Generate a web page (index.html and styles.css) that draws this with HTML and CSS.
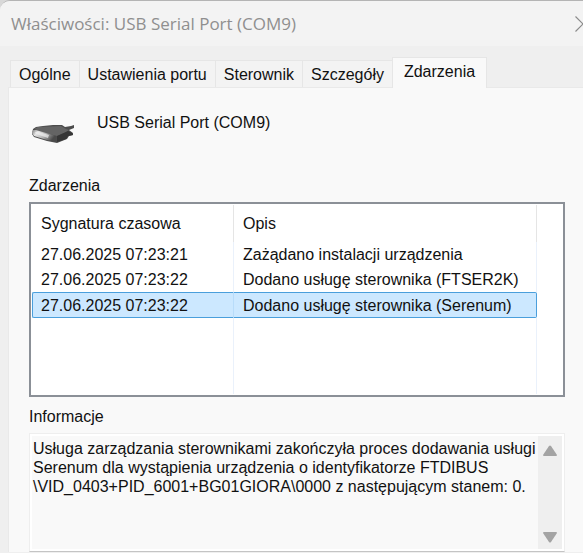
FILE: index.html
```
<!DOCTYPE html>
<html lang="pl">
<head>
  <meta charset="UTF-8" />
  <title>Właściwości: USB Serial Port (COM9)</title>
  <link rel="stylesheet" href="styles.css">
</head>
<body>

<div class="window">
  <header class="titlebar">
    <h1>Właściwości: USB Serial Port (COM9)</h1>
    <button type="button" class="close" aria-label="Zamknij">
      <svg width="16" height="16" viewBox="0 0 16 16" fill="none" stroke="#8c8c8c" stroke-width="1.2">
        <path d="M.5 .5L15.500 15.500M15.500 .5L.5 15.500" />
      </svg>
    </button>
  </header>

  <div class="tabs" role="tablist">
    <button type="button" class="tab" role="tab">Ogólne</button>
    <button type="button" class="tab" role="tab">Ustawienia portu</button>
    <button type="button" class="tab" role="tab">Sterownik</button>
    <button type="button" class="tab" role="tab">Szczegóły</button>
    <button type="button" class="tab active" role="tab" aria-selected="true">Zdarzenia</button>
  </div>

  <main class="panel">
    <div class="device">
      <svg class="device-icon" width="44" height="24" viewBox="0 0 44 24">
        <defs>
          <linearGradient id="front" x1="0" y1="0" x2="1" y2="0.400">
            <stop offset="0" stop-color="#777" />
            <stop offset="0.250" stop-color="#e4e4e4" />
            <stop offset="0.600" stop-color="#b4b4b4" />
            <stop offset="1" stop-color="#4a4a4a" />
          </linearGradient>
        </defs>
        <path d="M2 7L5 5L12 4L22 3L31 3L34 5L40 4L43 3L43 6L38 8L42 11L42 13L38 14L36 17L26 21L16 19L3 15L1 12Z" fill="#4c4c4c" />
        <path d="M3 7L7 5L30 4L35 7L38 8L34 11L26 14L14 11Z" fill="#646464" />
        <path d="M2 8L5 8L25 14L25 20L16 18L3 14L1 11Z" fill="url(#front)" />
        <path d="M4 10L8 10L18 13L17 16L5 12Z" fill="#f0f0f0" opacity="0.700" />
        <path d="M26 14L37 9L41 11L42 13L37 14L35 17L26 20Z" fill="#363636" />
      </svg>
      <span>USB Serial Port (COM9)</span>
    </div>

    <h2>Zdarzenia</h2>
    <div class="list">
      <table>
        <thead>
          <tr><th class="time">Sygnatura czasowa</th><th>Opis</th></tr>
        </thead>
        <tbody>
          <tr><td>27.06.2025 07:23:21</td><td>Zażądano instalacji urządzenia</td></tr>
          <tr><td>27.06.2025 07:23:22</td><td>Dodano usługę sterownika (FTSER2K)</td></tr>
          <tr class="selected"><td>27.06.2025 07:23:22</td><td>Dodano usługę sterownika (Serenum)</td></tr>
          <tr class="filler"><td></td><td></td></tr>
        </tbody>
      </table>
    </div>

    <label class="info-label" for="info">Informacje</label>
    <div class="info">
      <textarea id="info" rows="5" readonly>Usługa zarządzania sterownikami zakończyła proces dodawania usługi Serenum dla wystąpienia urządzenia o identyfikatorze FTDIBUS
\VID_0403+PID_6001+BG01GIORA\0000 z następującym stanem: 0.</textarea>
      <div class="scrollbar">
        <button type="button" aria-label="W górę">
          <svg width="16" height="12" viewBox="0 0 16 12"><path d="M7 1Q8 0 9 1L15 10Q15 11 14 11H2Q1 11 1 10Z" fill="#a3a3a3" /></svg>
        </button>
        <button type="button" aria-label="W dół">
          <svg width="16" height="12" viewBox="0 0 16 12"><path d="M7 11Q8 12 9 11L15 2Q15 1 14 1H2Q1 1 1 2Z" fill="#a3a3a3" /></svg>
        </button>
      </div>
    </div>
  </main>
</div>

</body>
</html>
```
FILE: styles.css
```
* {
  box-sizing: border-box;
}
body {
  margin: 0;
  background: #d8d8d8;
  color: #111;
  font-family: "Liberation Sans", Arial, sans-serif;
  font-size: 16px;
  line-height: 19px;
  overflow: hidden;
}
button {
  padding: 0;
  border: 0;
  background: none;
  color: inherit;
  font: inherit;
}
.window {
  min-height: 100vh;
  background: #efefef;
  border-top: 1px solid #b4b4b4;
  border-top-left-radius: 10px;
  overflow: hidden;
}
.titlebar {
  display: flex;
  align-items: center;
  justify-content: space-between;
  height: 45px;
  padding-left: 11px;
  background: #f3f3f3;
}
.titlebar h1 {
  margin: 0;
  color: #8f8f8f;
  font-family: "Segoe UI", "Open Sans", sans-serif;
  font-size: 17px;
  font-weight: 400;
}
.close {
  display: flex;
  margin-right: -8px;
}
.tabs {
  display: flex;
  align-items: flex-end;
  height: 41px;
  padding-left: 10px;
}
.tab {
  height: 27px;
  padding: 0 8px;
  background: #f3f3f3;
  border: 1px solid #e6e6e6;
  border-width: 1px 0 0 1px;
}
.tab.active {
  height: 31px;
  margin-bottom: -1px;
  padding: 0 11px 4px;
  background: #f9f9f9;
  border-right-width: 1px;
}
.panel {
  margin-left: 8px;
  padding: 25px 18px 0 20px;
  background: #f9f9f9;
  border: 1px solid #e9e9e9;
  border-width: 1px 0 0 1px;
}
.device {
  display: flex;
  gap: 22px;
  margin-bottom: 30px;
  padding-left: 2px;
}
.device-icon {
  margin-top: 9px;
}
h2,
.info-label {
  display: block;
  margin: 0 0 7px;
  font-size: 16px;
  font-weight: 400;
}
.list {
  height: 195px;
  margin-bottom: 10px;
  padding: 1px 26px 1px 1px;
  background: #fff;
  border: 2px solid #8b9097;
}
table {
  width: 100%;
  height: 100%;
  table-layout: fixed;
  border-collapse: separate;
  border-spacing: 0;
}
th,
td {
  height: 25px;
  padding: 0 9px;
  border-right: 1px solid #eaf1fb;
  font-weight: 400;
  text-align: left;
  white-space: nowrap;
}
th {
  height: 37px;
  border-color: #e5e5e5;
}
.time {
  width: 202px;
}
.selected td {
  height: 26px;
  background: #cce8ff;
  border-top: 1px solid #4a9fdc;
  border-bottom: 1px solid #4a9fdc;
  border-right-color: #b8dcfa;
}
.selected td:first-child {
  padding-left: 8px;
  border-left: 1px solid #4a9fdc;
  border-radius: 2px 0 0 2px;
}
.selected td:last-child {
  border-right-color: #4a9fdc;
  border-radius: 0 2px 2px 0;
}
.filler td {
  height: auto;
}
.info {
  display: flex;
  padding: 2px;
  border: 1px solid #eee;
  border-bottom-color: #c4c4c4;
  box-shadow: inset 0 0 0 2px #fff;
}
.info textarea {
  flex: 1;
  min-width: 0;
  padding: 3px 0 15px 1px;
  border: 0;
  outline: 0;
  background: #f9f9f9;
  color: inherit;
  font: inherit;
  resize: none;
  overflow: hidden;
}
.scrollbar {
  display: flex;
  flex-direction: column;
  justify-content: space-between;
  width: 24px;
  padding: 9px 0 6px;
  background: #efefef;
}
.scrollbar button {
  display: flex;
  justify-content: center;
}
```
